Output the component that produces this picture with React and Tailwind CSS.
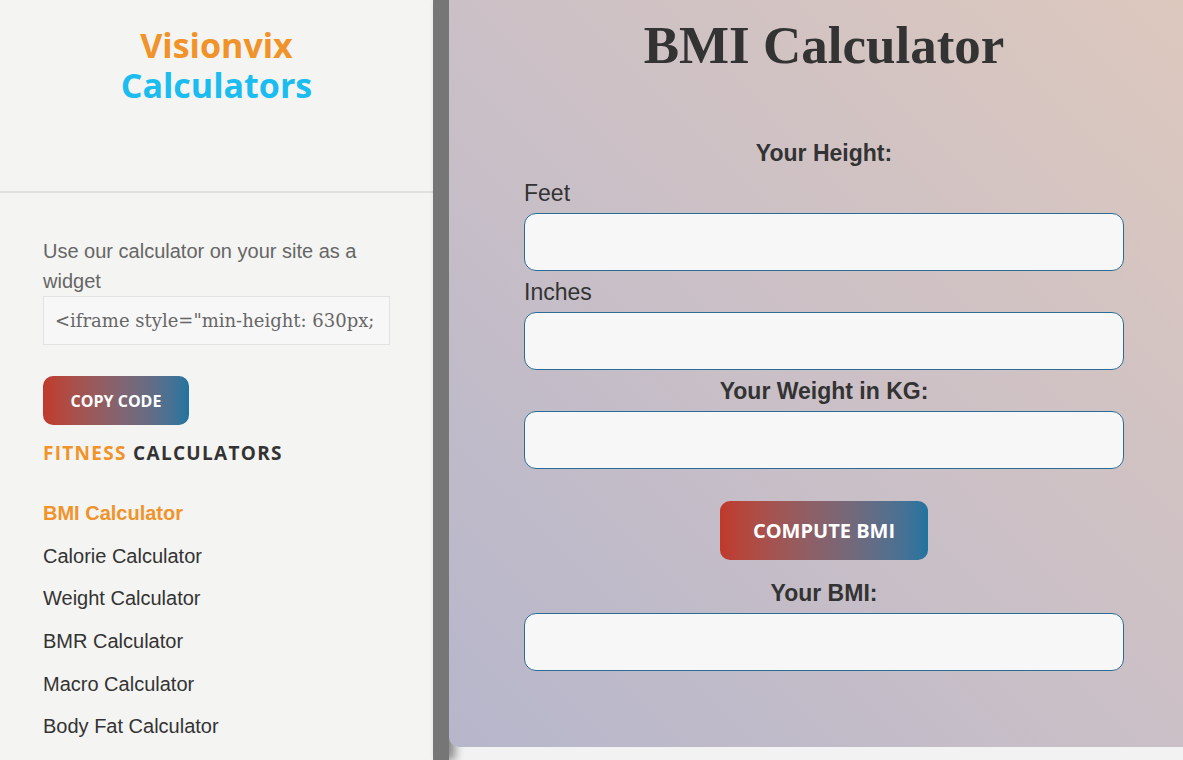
import React from "react";

const navLinks = [
  "Calorie Calculator",
  "Weight Calculator",
  "BMR Calculator",
  "Macro Calculator",
  "Body Fat Calculator",
];

function Sidebar() {
  return (
    <div className="w-[433px] shrink-0 bg-[#f4f4f2] h-full">
      <div className="h-[191px] pt-[25px] text-center font-['Open_Sans',sans-serif] font-bold text-[34px] leading-[40px]">
        <div className="text-[#f0932b]">Visionvix</div>
        <div className="text-[#1bbcef]">Calculators</div>
      </div>
      <div className="h-[2px] bg-[#e0e0e0]"></div>
      <div className="px-[43px] pt-[43px]">
        <p className="font-['Liberation_Sans',Arial,sans-serif] text-[20px] leading-[30px] text-[#666]">
          Use our calculator on your site as a widget
        </p>
        <div className="h-[49px] border border-[#e2e2e2] bg-[#f7f7f7] flex items-center px-[11px]">
          <div className="overflow-hidden whitespace-nowrap font-['DejaVu_Serif',serif] text-[18px] text-[#666]">
            &lt;iframe style="min-height: 630px; width: 100%;"
          </div>
        </div>
        {/* copy button */}
        <button className="mt-[31px] h-[49px] w-[146px] rounded-[10px] bg-linear-to-r from-[#c0392b] to-[#1f74a0] text-white font-['Open_Sans',sans-serif] font-bold text-[16px]">
          COPY CODE
        </button>
        <div className="mt-[14px] h-[28px] leading-[28px] font-['Open_Sans',sans-serif] font-bold text-[19px] tracking-[1.3px]">
          <span className="text-[#f0932b]">FITNESS</span>{" "}
          <span className="text-[#333]">CALCULATORS</span>
        </div>
        <div className="mt-[25px] font-['Liberation_Sans',Arial,sans-serif] text-[20px]">
          <div className="h-[42.6px] flex items-center font-bold text-[#f0932b]">
            BMI Calculator
          </div>
          {navLinks.map((l) => (
            <div key={l} className="h-[42.6px] flex items-center text-[#333]">
              {l}
            </div>
          ))}
        </div>
      </div>
    </div>
  );
}

function Field() {
  return (
    <div className="h-[58px] w-full rounded-[12px] border border-[#2b6c96] bg-[#f7f7f7]"></div>
  );
}

function App() {
  return (
    <div className="flex h-[760px] w-[1183px] overflow-hidden bg-[#f2f2f2]">
      <Sidebar />
      <div className="w-[16px] shrink-0 bg-[#767676] shadow-[6px_0_10px_rgba(0,0,0,0.45)]"></div>
      <div className="flex-1 min-w-0">
        <div className="w-[750px] h-[747px] rounded-b-[10px] bg-linear-to-tr from-[#b6b6cb] via-[#cbc0c6] to-[#ddc8bd] pt-[15px]">
          <h1 className="h-[60px] leading-[60px] text-center font-['Liberation_Serif',serif] font-bold text-[53px] text-[#333]">
            BMI Calculator
          </h1>
          <div className="w-[600px] mx-auto mt-[58px] font-['Liberation_Sans',Arial,sans-serif] text-[#333]">
            <div className="h-10 leading-10 text-center font-bold text-[23px]">
              Your Height:
            </div>
            <div className="h-10 leading-10 text-[23px]">Feet</div>
            <Field />
            <div className="h-[41px] leading-[42px] text-[23px]">Inches</div>
            <Field />
            <div className="h-[41px] leading-[42px] text-center font-bold text-[23px]">
              Your Weight in KG:
            </div>
            <Field />
            <div className="flex justify-center mt-[32px]">
              <button className="h-[59px] w-[208px] rounded-[10px] bg-linear-to-r from-[#c0392b] to-[#1f74a0] text-white font-['Open_Sans',sans-serif] font-bold text-[20px]">
                COMPUTE BMI
              </button>
            </div>
            <div className="mt-[13px] h-10 leading-10 text-center font-bold text-[23px]">
              Your BMI:
            </div>
            <Field />
          </div>
        </div>
      </div>
    </div>
  );
}

export default App;
